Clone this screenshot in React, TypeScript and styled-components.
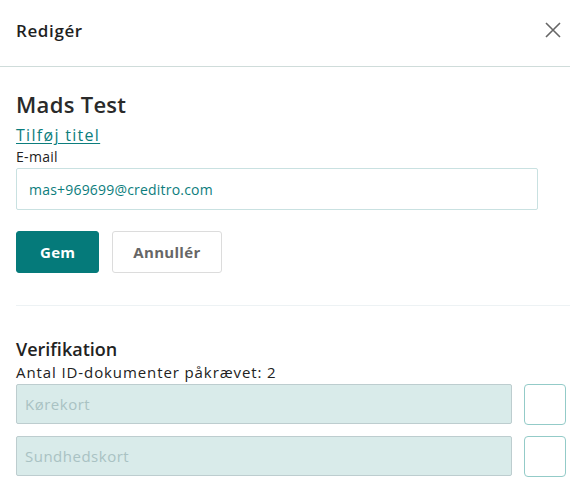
import React from "react";
import { createGlobalStyle, styled } from "styled-components";

const Global = createGlobalStyle`
  html, body { margin: 0; padding: 0; background: #fff; }
  body { font-family: "Open Sans", "Noto Sans", sans-serif; color: #252525; }
  * { box-sizing: border-box; }
`;

const Panel = styled.div`
  width: 570px;
  height: 493px;
  overflow: hidden;
  background: #fff;
`;

const Header = styled.header`
  height: 67px;
  display: flex;
  align-items: center;
  justify-content: space-between;
  padding: 0 5px 6px 16px;
  border-bottom: 1px solid #cfdcda;
`;

const HeaderTitle = styled.h1`
  margin: 0;
  font-size: 17px;
  font-weight: 600;
  letter-spacing: 0.6px;
  color: #1f1f1f;
`;

const CloseButton = styled.button`
  width: 24px;
  height: 24px;
  padding: 0;
  border: 0;
  background: none;
  display: flex;
  align-items: center;
  justify-content: center;
  color: #666;
  cursor: pointer;
`;

const Body = styled.div`
  padding: 22px 0 0 16px;
`;

const Name = styled.h2`
  margin: 0;
  font-size: 22px;
  line-height: 30px;
  font-weight: 600;
  letter-spacing: 0.3px;
  color: #2a2a2a;
`;

const TitleLink = styled.a`
  display: inline-block;
  margin-top: 6px;
  font-size: 16px;
  line-height: 20px;
  letter-spacing: 1.3px;
  color: #0c7d7d;
  text-decoration: underline;
  text-underline-offset: 2px;
`;

const Label = styled.label`
  display: block;
  margin-top: 2px;
  font-size: 14px;
  line-height: 18px;
  letter-spacing: 0.3px;
  color: #222;
`;

const TextInput = styled.input`
  display: block;
  width: 522px;
  height: 42px;
  margin-top: 2px;
  padding: 0 12px;
  border: 1px solid #c9e1e1;
  border-radius: 2px;
  font-family: inherit;
  font-size: 14px;
  letter-spacing: 0.2px;
  color: #0c7d7d;
  outline: none;
`;

const Actions = styled.div`
  display: flex;
  gap: 13px;
  margin-top: 21px;
`;

const Button = styled.button<{ $primary?: boolean }>`
  height: 42px;
  padding: 0 ${(p) => (p.$primary ? "23px" : "20px")};
  border-radius: 3px;
  border: 1px solid ${(p) => (p.$primary ? "#057a7a" : "#dcdcdc")};
  background: ${(p) => (p.$primary ? "#057a7a" : "#fff")};
  color: ${(p) => (p.$primary ? "#fff" : "#666")};
  font-family: inherit;
  font-size: 15px;
  font-weight: 700;
  letter-spacing: 0.3px;
  cursor: pointer;
`;

const Divider = styled.hr`
  margin: 32px 0 0;
  border: 0;
  border-top: 1px solid #edf2f4;
`;

const Section = styled.section`
  margin-top: 31px;
`;

const SectionTitle = styled.h3`
  margin: 0;
  font-size: 18px;
  line-height: 24px;
  font-weight: 600;
  letter-spacing: 0;
  color: #222;
`;

const Hint = styled.p`
  margin: 1px 0 0;
  font-size: 15px;
  line-height: 20px;
  letter-spacing: 0.9px;
  color: #222;
`;

const DocList = styled.div`
  display: flex;
  flex-direction: column;
  gap: 11px;
  margin-top: 2px;
`;

const DocRow = styled.div`
  display: flex;
  align-items: flex-start;
  gap: 12px;
`;

const DocInput = styled.input`
  width: 496px;
  height: 40px;
  padding: 0 8px;
  border: 1px solid #bdcdcf;
  border-radius: 2px;
  background: #d9ebea;
  font-family: inherit;
  font-size: 15px;
  letter-spacing: 0.5px;
  color: #333;
  outline: none;
  &::placeholder { color: #a9c2c3; }
`;

const CheckBox = styled.div`
  width: 42px;
  height: 41px;
  border: 1px solid #93cbc8;
  border-radius: 4px;
  background: #fff;
`;

const docs = ["Kørekort", "Sundhedskort"];

export default function App() {
  return (
    <Panel>
      <Global />
      <Header>
        <HeaderTitle>Redigér</HeaderTitle>
        <CloseButton aria-label="Luk">
          <svg width="16" height="16" viewBox="0 0 16 16" fill="none" stroke="currentColor" strokeWidth="1.6">
            <path d="M1 1L15 15M15 1L1 15" />
          </svg>
        </CloseButton>
      </Header>
      <Body>
        <Name>Mads Test</Name>
        <TitleLink href="#">Tilføj titel</TitleLink>
        <Label>E-mail</Label>
        <TextInput defaultValue="mas+969699@creditro.com" />
        <Actions>
          <Button $primary>Gem</Button>
          <Button>Annullér</Button>
        </Actions>
        <Divider />
        <Section>
          <SectionTitle>Verifikation</SectionTitle>
          <Hint>Antal ID-dokumenter påkrævet: 2</Hint>
          <DocList>
            {docs.map((d) => (
              <DocRow key={d}>
                <DocInput placeholder={d} disabled />
                <CheckBox />
              </DocRow>
            ))}
          </DocList>
        </Section>
      </Body>
    </Panel>
  );
}
